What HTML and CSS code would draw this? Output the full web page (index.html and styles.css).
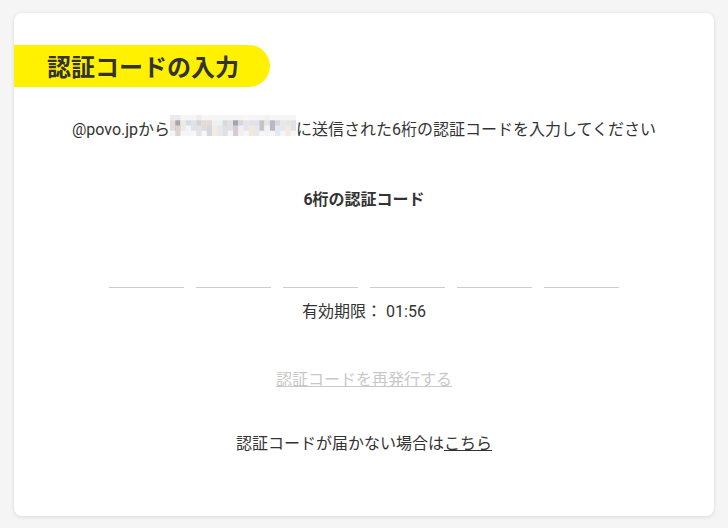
FILE: index.html
```html
<!DOCTYPE html>
<html lang="ja">
<head>
    <meta charset="UTF-8">
    <meta name="viewport" content="width=device-width, initial-scale=1.0">
    <title>認証コードの入力</title>
    <link rel="stylesheet" href="styles.css">
</head>
<body>

<div class="card">
    <!-- Title band -->
    <h1 class="title">認証コードの入力</h1>

    <p class="lead">@povo.jpから<svg class="mosaic" width="126" height="21" viewBox="0 0 24 4" preserveAspectRatio="none">
        <rect x="0" y="0" width="24" height="4" fill="#f6f6f8"/>
        <rect x="0" y="0" width="2" height="1" fill="#ebeaee"/>
        <rect x="5" y="0" width="1" height="1" fill="#eeeef1"/>
        <rect x="14" y="0" width="1" height="1" fill="#fbf8f1"/>
        <rect x="18" y="0" width="1" height="1" fill="#f1f1f4"/>
        <rect x="0" y="1" width="1" height="2" fill="#e5dbd8"/>
        <rect x="1" y="1" width="1" height="2" fill="#a6a6ad"/>
        <rect x="2" y="1" width="1" height="2" fill="#eeebe2"/>
        <rect x="3" y="1" width="1" height="2" fill="#d7dce3"/>
        <rect x="4" y="1" width="1" height="2" fill="#dfe2e6"/>
        <rect x="5" y="1" width="1" height="2" fill="#d2d2d2"/>
        <rect x="6" y="1" width="1" height="2" fill="#e3dad9"/>
        <rect x="7" y="1" width="1" height="2" fill="#e6dad3"/>
        <rect x="8" y="1" width="1" height="2" fill="#eef0f0"/>
        <rect x="9" y="1" width="1" height="2" fill="#e7f3f5"/>
        <rect x="10" y="1" width="1" height="2" fill="#d9dad6"/>
        <rect x="11" y="1" width="1" height="2" fill="#dfe2e4"/>
        <rect x="12" y="1" width="1" height="2" fill="#a4a5b2"/>
        <rect x="13" y="1" width="1" height="2" fill="#dcd3d3"/>
        <rect x="14" y="1" width="1" height="2" fill="#e4e5ea"/>
        <rect x="15" y="1" width="1" height="2" fill="#e0e2e8"/>
        <rect x="16" y="1" width="1" height="2" fill="#dee3ea"/>
        <rect x="17" y="1" width="1" height="2" fill="#c9c3c8"/>
        <rect x="18" y="1" width="1" height="2" fill="#e8e6e4"/>
        <rect x="19" y="1" width="1" height="2" fill="#b8b9c3"/>
        <rect x="20" y="1" width="1" height="2" fill="#ddd6d6"/>
        <rect x="21" y="1" width="1" height="2" fill="#e4e7ec"/>
        <rect x="22" y="1" width="1" height="2" fill="#ebe4dc"/>
        <rect x="23" y="1" width="1" height="2" fill="#dfe3e9"/>
        <rect x="1" y="2" width="1" height="2" fill="#ddd4cf"/>
        <rect x="3" y="2" width="1" height="2" fill="#f3f5f8"/>
        <rect x="5" y="2" width="1" height="2" fill="#e1e4e6"/>
        <rect x="7" y="2" width="1" height="2" fill="#d0d8e6"/>
        <rect x="8" y="2" width="1" height="2" fill="#f5ebe0"/>
        <rect x="9" y="2" width="1" height="2" fill="#e8e9ee"/>
        <rect x="10" y="2" width="1" height="2" fill="#dfe1e4"/>
        <rect x="12" y="2" width="1" height="2" fill="#d6ccd0"/>
        <rect x="13" y="2" width="1" height="2" fill="#eef0f3"/>
        <rect x="15" y="2" width="1" height="2" fill="#f2e7da"/>
        <rect x="16" y="2" width="1" height="2" fill="#e5e8ef"/>
        <rect x="18" y="2" width="1" height="2" fill="#f2f3f6"/>
        <rect x="20" y="2" width="1" height="2" fill="#e6e9ef"/>
        <rect x="22" y="2" width="1" height="2" fill="#f4eadf"/>
    </svg>に送信された6桁の認証コードを入力してください</p>

    <p class="label">6桁の認証コード</p>

    <!-- Code inputs -->
    <div class="code">
        <input type="text" maxlength="1" inputmode="numeric">
        <input type="text" maxlength="1" inputmode="numeric">
        <input type="text" maxlength="1" inputmode="numeric">
        <input type="text" maxlength="1" inputmode="numeric">
        <input type="text" maxlength="1" inputmode="numeric">
        <input type="text" maxlength="1" inputmode="numeric">
    </div>

    <p class="timer">有効期限： 01:56</p>

    <p class="resend"><a href="#">認証コードを再発行する</a></p>

    <p class="help">認証コードが届かない場合は<a href="#">こちら</a></p>
</div>

</body>
</html>
```

FILE: styles.css
```css
body {
    font-family: Roboto, "Noto Sans CJK JP", sans-serif;
    background-color: #f5f5f5;
    margin: 0;
    padding: 13px 14px 12px;
    color: #333;
}
.card {
    width: 700px;
    height: 503px;
    box-sizing: border-box;
    background-color: #fff;
    border-radius: 8px;
    box-shadow: 0 1px 4px rgba(0, 0, 0, 0.12);
    padding-top: 32px;
    text-align: center;
}
.title {
    width: 256px;
    height: 42px;
    box-sizing: border-box;
    margin: 0;
    padding-left: 33px;
    background-color: #fff100;
    border-radius: 0 21px 21px 0;
    font-family: "Noto Sans CJK JP", sans-serif;
    font-size: 24px;
    font-weight: bold;
    line-height: 42px;
    text-align: left;
    color: #333;
}
.card p {
    margin: 0;
    font-size: 16px;
    line-height: 24px;
}
.lead {
    margin-top: 28px !important;
}
.mosaic {
    vertical-align: -1px;
}
.label {
    margin-top: 46px !important;
    font-weight: bold;
}
.code {
    display: flex;
    justify-content: center;
    gap: 12px;
    margin-top: 38px;
}
.code input {
    width: 75px;
    height: 38px;
    box-sizing: border-box;
    border: none;
    border-bottom: 1px solid #c9ccd3;
    font-size: 24px;
    text-align: center;
    outline: none;
}
.timer {
    margin-top: 12px !important;
}
.resend {
    margin-top: 44px !important;
}
.resend a {
    color: #c8c8c8;
}
.help {
    margin-top: 40px !important;
}
.help a {
    color: #333;
}
```
